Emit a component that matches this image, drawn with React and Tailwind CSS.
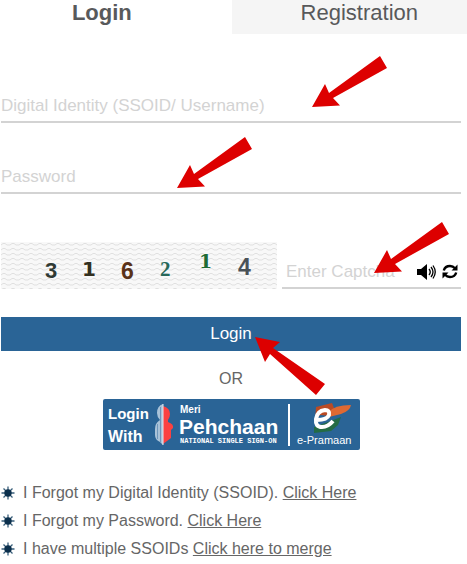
const CAPTCHA = [
  { char: '3', x: 44, y: 36, size: 22, color: '#2f3a34', font: 'Liberation Sans' },
  { char: '1', x: 81, y: 34, size: 20, color: '#33301f', font: 'DejaVu Sans' },
  { char: '6', x: 120, y: 37, size: 23, color: '#5a3218', font: 'Liberation Sans' },
  { char: '2', x: 159, y: 34, size: 21, color: '#27685a', font: 'Liberation Serif' },
  { char: '1', x: 198, y: 26, size: 19, color: '#1f6b35', font: 'DejaVu Serif' },
  { char: '4', x: 237, y: 33, size: 23, color: '#4a5258', font: 'Liberation Sans' },
]

const HELP = [
  { text: 'I Forgot my Digital Identity (SSOID).', link: 'Click Here' },
  { text: 'I Forgot my Password.', link: 'Click Here' },
  { text: 'I have multiple SSOIDs', link: 'Click here to merge' },
]

function Arrow({ className }) {
  return (
    <svg width="75" height="51" viewBox="0 0 75 51" aria-hidden="true" className={`absolute pointer-events-none ${className}`}>
      <path d="M0 51L13 28L17 37L68 0L75 12L21 42L28 49.500Z" fill="#dd0000" />
    </svg>
  )
}

function Captcha() {
  return (
    <svg width="276" height="47" viewBox="0 0 276 47" role="img" aria-label="Captcha" className="shrink-0">
      <defs>
        <pattern id="waves" width="9" height="5" patternUnits="userSpaceOnUse">
          <path d="M0 3L2 1.500H4L6 3H9" fill="none" stroke="#e0e0e0" strokeWidth="1" />
        </pattern>
      </defs>
      <rect width="276" height="47" fill="#f8f8f8" />
      <rect width="276" height="47" fill="url(#waves)" />
      {CAPTCHA.map((c) => (
        <text key={c.x} x={c.x} y={c.y} fontSize={c.size} fontFamily={c.font} fontWeight="bold" fill={c.color}>
          {c.char}
        </text>
      ))}
    </svg>
  )
}

function Speaker() {
  return (
    <svg width="19" height="16" viewBox="0 0 19 16" aria-hidden="true">
      <path d="M0 5H4L10 0V16L4 11H0Z" fill="#000" />
      <path d="M12 5Q14.500 8 12 11M14 3Q18 8 14 13M16 1.500Q20.500 8 16 14.500" fill="none" stroke="#000" strokeWidth="1.300" />
    </svg>
  )
}

function Refresh() {
  return (
    <svg width="16" height="15" viewBox="0 0 16 15" aria-hidden="true">
      <path d="M1.800 6.500Q3 2 8 2Q11 2 13 4.200M14.200 8.500Q13 13 8 13Q5 13 3 10.800" fill="none" stroke="#000" strokeWidth="2.400" />
      <path d="M15.500 0.500V6.500H9.500ZM0.500 14.500V8.500H6.500Z" fill="#000" />
    </svg>
  )
}

function PehchaanBanner() {
  return (
    <svg width="257" height="51" viewBox="0 0 257 51" fill="#fff" fontFamily="Liberation Sans, sans-serif" fontWeight="bold">
      <rect width="257" height="51" rx="2" fill="#2a6496" />
      <text x="5" y="20" fontSize="15">Login</text>
      <text x="5" y="43" fontSize="16">With</text>

      {/* Split silhouette */}
      <path d="M60 5Q54 7 54 14Q54 18 57 21Q52 24 52 30V36Q52 41 57 43L60 46Z" fill="#a9c2d8" />
      <path d="M57.500 8V43M54.500 25V40" stroke="#6f97bb" strokeWidth="1" />
      <path d="M60 7Q67 9 67 15Q67 18 65 21V23Q71 25 70 29L68 31L68 39L60 45Z" fill="#fb4141" />
      <path d="M60 5V46" stroke="#dfe9f2" strokeWidth="1" />

      <text x="77" y="14" fontSize="10">Meri</text>
      <text x="76" y="35" fontSize="21">Pehchaan</text>
      <text x="77" y="44" fontSize="7" fontFamily="Liberation Mono">NATIONAL SINGLE SIGN-ON</text>
      <path d="M186 5V47" stroke="#fff" strokeWidth="2" />

      {/* e-Pramaan mark */}
      <path d="M213 8L229 4L231 9L237 11L229 17L217 16L212 22Z" fill="#b94b25" />
      <path d="M226 13Q231 6 248 6Q247 12 238 15L226 18Z" fill="#df6932" />
      <path d="M225 23L238 18L235 26L228 32L211 34V28Z" fill="#246b45" />
      <path d="M214 21Q224 21 226 16Q227 11 222 11Q214 12 213 20Q212 28 219 28Q225 28 230 22" fill="none" stroke="#fff" strokeWidth="4" />
      <text x="194" y="45" fontSize="11" fontWeight="normal">e-Pramaan</text>
    </svg>
  )
}

function Bullet() {
  return (
    <svg width="14" height="14" viewBox="0 0 14 14" aria-hidden="true" className="shrink-0">
      <path d="M7 0.500V13.500M0.500 7H13.500M2.500 2.500L11.500 11.500M11.500 2.500L2.500 11.500" stroke="#3a5f7b" strokeWidth="1.300" />
      <circle cx="7" cy="7" r="3.700" fill="#0b2f4c" />
    </svg>
  )
}

export default function App() {
  return (
    <main className="bg-white font-['Liberation_Sans',sans-serif] text-base text-[#666]">

      {/* Tabs */}
      <div role="tablist" className="grid grid-cols-[49.6%_1fr] text-[22px] leading-6 text-[#58595b]">
        <button type="button" role="tab" aria-selected="true" className="pt-px pb-[9px] pr-7 font-bold">Login</button>
        <button type="button" role="tab" aria-selected="false" className="pt-px pb-[9px] pl-5 bg-[#f5f5f5]">Registration</button>
      </div>

      <form className="pl-px pr-1.5" onSubmit={(e) => e.preventDefault()}>
        <div className="relative mt-14">
          <input
            type="text"
            aria-label="Digital Identity (SSOID/ Username)"
            placeholder="Digital Identity (SSOID/ Username)"
            className="block w-full h-[33px] border-b-2 border-[#d3d3d3] text-[17px] placeholder:text-[#d3d3d3] outline-none"
          />
          <Arrow className="left-[311px] bottom-4" />
        </div>

        <div className="relative mt-[38px]">
          <input
            type="password"
            aria-label="Password"
            placeholder="Password"
            className="block w-full h-[33px] border-b-2 border-[#d3d3d3] text-[17px] placeholder:text-[#d3d3d3] outline-none"
          />
          <Arrow className="left-[176px] bottom-1.5" />
        </div>

        <div className="relative mt-12 flex items-end gap-[5px]">
          <Captcha />
          <div className="flex flex-1 min-w-0 items-center border-b-2 border-[#d3d3d3] pl-1">
            <input
              type="text"
              aria-label="Enter Captcha"
              placeholder="Enter Captcha"
              className="flex-1 min-w-0 h-[31px] text-[17px] placeholder:text-[#d3d3d3] outline-none"
            />
            <button type="button" aria-label="Play captcha" className="mr-1.5"><Speaker /></button>
            <button type="button" aria-label="Refresh captcha" className="mr-[3px]"><Refresh /></button>
          </div>
          <Arrow className="left-[373px] bottom-4" />
        </div>

        <div className="relative mt-7">
          <button type="submit" className="block w-full h-[34px] bg-[#2a6496] text-white text-[17px]">Login</button>
          <svg width="71" height="58" viewBox="0 0 71 58" aria-hidden="true" className="absolute left-[254px] top-5 pointer-events-none">
            <path d="M0 0L25 5L18 11L70 47L61 58L15 17L10 25Z" fill="#dd0000" />
          </svg>
        </div>

        <p className="mt-4 text-center leading-6">OR</p>
        <button type="button" aria-label="Login with Meri Pehchaan e-Pramaan" className="mt-2 mx-auto block">
          <PehchaanBanner />
        </button>
      </form>

      {/* Account help */}
      <ul className="mt-[29px] leading-7">
        {HELP.map((h) => (
          <li key={h.text} className="flex items-center gap-2 pl-px">
            <Bullet />
            <span>{h.text} <a href="#" className="underline">{h.link}</a></span>
          </li>
        ))}
      </ul>
    </main>
  )
}
